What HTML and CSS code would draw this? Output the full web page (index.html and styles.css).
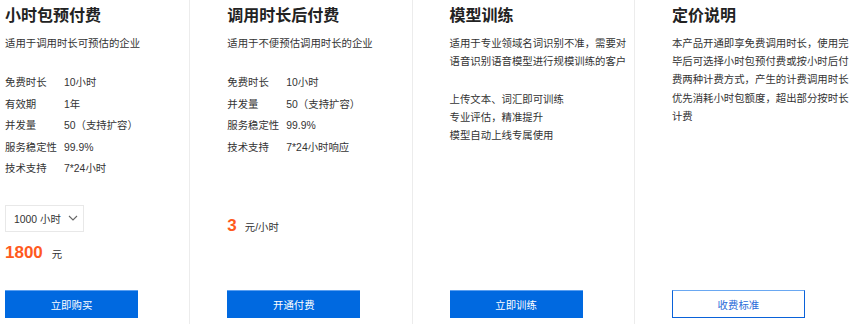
FILE: index.html
```html
<!DOCTYPE html>
<html lang="zh-CN">
<head>
    <meta charset="UTF-8">
    <title>价格</title>
    <link rel="stylesheet" href="styles.css">
</head>
<body>
    <div class="plans">
        <div class="plan">
            <h2 class="plan-title">小时包预付费</h2>
            <p class="plan-desc">适用于调用时长可预估的企业</p>
            <ul class="spec">
                <li><span class="spec-key">免费时长</span>10小时</li>
                <li><span class="spec-key">有效期</span>1年</li>
                <li><span class="spec-key">并发量</span>50（支持扩容）</li>
                <li><span class="spec-key">服务稳定性</span>99.9%</li>
                <li><span class="spec-key">技术支持</span>7*24小时</li>
            </ul>
            <div class="select">
                <span>1000 小时</span>
                <svg width="10" height="6" viewBox="0 0 10 6"><polyline points="1,1 5,5 9,1" fill="none" stroke="#666" stroke-width="1.1"/></svg>
            </div>
            <div class="price price-pack"><b>1800</b><span>元</span></div>
            <button class="btn">立即购买</button>
        </div>
        <div class="plan">
            <h2 class="plan-title">调用时长后付费</h2>
            <p class="plan-desc">适用于不便预估调用时长的企业</p>
            <ul class="spec">
                <li><span class="spec-key">免费时长</span>10小时</li>
                <li><span class="spec-key">并发量</span>50（支持扩容）</li>
                <li><span class="spec-key">服务稳定性</span>99.9%</li>
                <li><span class="spec-key">技术支持</span>7*24小时响应</li>
            </ul>
            <div class="price price-post"><b>3</b><span>元/小时</span></div>
            <button class="btn">开通付费</button>
        </div>
        <div class="plan">
            <h2 class="plan-title">模型训练</h2>
            <p class="plan-desc">适用于专业领域名词识别不准，需要对语音识别语音模型进行规模训练的客户</p>
            <ul class="features">
                <li>上传文本、词汇即可训练</li>
                <li>专业评估，精准提升</li>
                <li>模型自动上线专属使用</li>
            </ul>
            <button class="btn">立即训练</button>
        </div>
        <div class="plan">
            <h2 class="plan-title">定价说明</h2>
            <p class="plan-desc">本产品开通即享免费调用时长，使用完毕后可选择小时包预付费或按小时后付费两种计费方式，产生的计费调用时长优先消耗小时包额度，超出部分按时长计费</p>
            <button class="btn btn-outline">收费标准</button>
        </div>
    </div>
</body>
</html>
```

FILE: styles.css
```css
body {
    margin: 0;
    background: #fff;
    font-family: "Liberation Sans", "Noto Sans CJK SC", sans-serif;
    color: #333;
    overflow: hidden;
}
.plans {
    display: flex;
    margin-left: -32px;
    height: 324px;
}
.plan {
    box-sizing: border-box;
    width: 222.3px;
    flex-shrink: 0;
    padding: 6px 0 6px 37px;
    border-right: 1px solid #ececec;
    display: flex;
    flex-direction: column;
    align-items: flex-start;
}
.plan:last-child {
    border-right: none;
}
.plan-title {
    margin: 0 0 9px;
    font-size: 16px;
    line-height: 20px;
    font-weight: bold;
    color: #222;
}
.plan-desc {
    margin: 0;
    font-size: 10.4px;
    line-height: 18.2px;
    width: 177px;
    color: #333;
}
.spec {
    list-style: none;
    margin: 19px 0 0;
    padding: 0;
    font-size: 10.4px;
}
.spec li {
    display: flex;
    line-height: 21.5px;
    height: 21.5px;
}
.spec-key {
    width: 59px;
    flex-shrink: 0;
}
.features {
    list-style: none;
    margin: 20px 0 0;
    padding: 0;
    font-size: 10.4px;
    line-height: 18px;
}
.select {
    box-sizing: border-box;
    margin-top: 25px;
    width: 79px;
    height: 27px;
    border: 1px solid #e8e8e8;
    padding: 0 0 0 8px;
    display: flex;
    align-items: center;
    gap: 7px;
    font-size: 10.4px;
    color: #333;
}
.price {
    display: flex;
    align-items: baseline;
    line-height: 24px;
}
.price b {
    font-size: 17px;
    color: #ff5a1e;
}
.price span {
    font-size: 10.4px;
    margin-left: 9px;
    color: #333;
}
.price-pack {
    margin-top: 9px;
}
.price-post {
    margin-top: 56px;
}
.price-post span {
    margin-left: 8px;
}
.btn {
    margin-top: auto;
    box-sizing: border-box;
    width: 133px;
    height: 28px;
    border: none;
    border-top: 1px solid #5a9ff0;
    background: #0069e0;
    color: #fff;
    font-family: inherit;
    font-size: 10.4px;
    cursor: pointer;
}
.btn-outline {
    background: #fff;
    border: 1px solid #0a62d9;
    border-top-color: #6aa8f2;
    color: #2a6bd8;
}
```
